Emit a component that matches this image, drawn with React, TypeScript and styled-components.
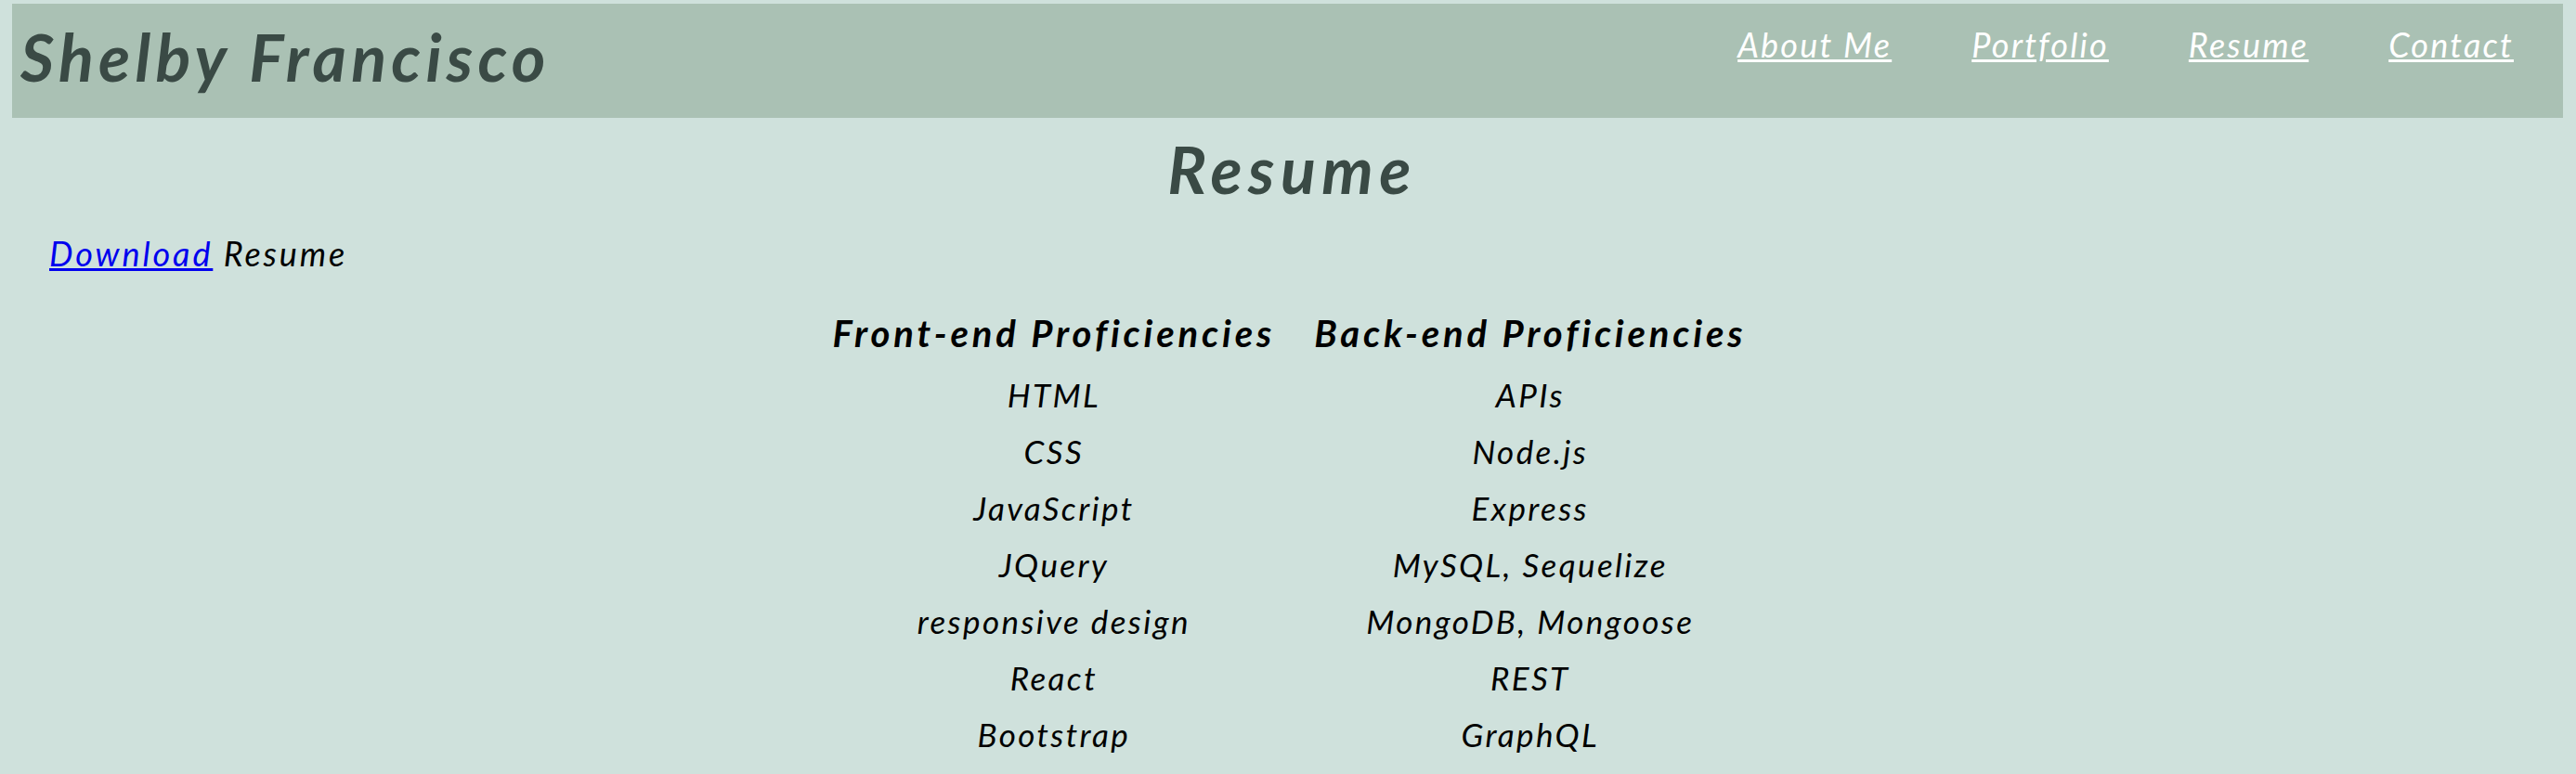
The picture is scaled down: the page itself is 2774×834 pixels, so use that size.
import React from "react";
import styled, { createGlobalStyle } from "styled-components";

const Global = createGlobalStyle`
  html, body { margin: 0; padding: 0; background: #cfe1dc; }
  body { font-family: "Lato", "Noto Sans", sans-serif; font-style: italic; color: #000; }
`;

const Page = styled.div`
  height: 834px;
  overflow: hidden;
  padding: 4px 14px 0 13px;
  box-sizing: border-box;
`;

const Header = styled.header`
  height: 123px;
  background: #aac1b4;
  display: flex;
  justify-content: space-between;
  align-items: flex-start;
`;

const Brand = styled.h1`
  margin: 18px 0 0 9px;
  font-size: 70px;
  line-height: 78px;
  font-weight: 700;
  letter-spacing: 5.3px;
  color: #3a4a45;
`;

const Nav = styled.nav`
  display: flex;
  gap: 86px;
  margin: 22px 53px 0 0;
`;

const NavLink = styled.a`
  font-size: 36px;
  line-height: 44px;
  color: #fff;
  text-decoration: underline;
  letter-spacing: 2.2px;
`;

const Title = styled.h2`
  margin: 19px 0 0;
  padding-left: 10px;
  text-align: center;
  font-size: 70px;
  line-height: 72px;
  font-weight: 700;
  letter-spacing: 6.5px;
  color: #3a4a45;
`;

const DownloadLine = styled.p`
  margin: 33px 0 0 40px;
  font-size: 36px;
  line-height: 44px;
  letter-spacing: 2.9px;
`;

const DownloadLink = styled.a`
  color: #0000ee;
  text-decoration: underline;
`;

const Table = styled.table`
  margin: 28px auto 0;
  padding-left: 4px;
  border-collapse: separate;
  border-spacing: 0;
`;

const HeadCell = styled.th`
  padding: 0 21px;
  height: 71px;
  font-size: 40px;
  font-weight: 700;
  letter-spacing: 3.85px;
  text-align: center;
  white-space: nowrap;
`;

const Cell = styled.td`
  padding: 0;
  height: 61px;
  font-size: 35px;
  letter-spacing: 2.4px;
  text-align: center;
  white-space: nowrap;
`;

const rows = [
  ["HTML", "APIs"],
  ["CSS", "Node.js"],
  ["JavaScript", "Express"],
  ["JQuery", "MySQL, Sequelize"],
  ["responsive design", "MongoDB, Mongoose"],
  ["React", "REST"],
  ["Bootstrap", "GraphQL"],
];

export default function App() {
  return (
    <Page>
      <Global />
      <Header>
        <Brand>Shelby Francisco</Brand>
        <Nav>
          <NavLink href="#">About Me</NavLink>
          <NavLink href="#">Portfolio</NavLink>
          <NavLink href="#">Resume</NavLink>
          <NavLink href="#">Contact</NavLink>
        </Nav>
      </Header>
      <Title>Resume</Title>
      <DownloadLine>
        <DownloadLink href="#">Download</DownloadLink> Resume
      </DownloadLine>
      <Table>
        <thead>
          <tr>
            <HeadCell>Front-end Proficiencies</HeadCell>
            <HeadCell>Back-end Proficiencies</HeadCell>
          </tr>
        </thead>
        <tbody>
          {rows.map(([a, b]) => (
            <tr key={a}>
              <Cell>{a}</Cell>
              <Cell>{b}</Cell>
            </tr>
          ))}
        </tbody>
      </Table>
    </Page>
  );
}
